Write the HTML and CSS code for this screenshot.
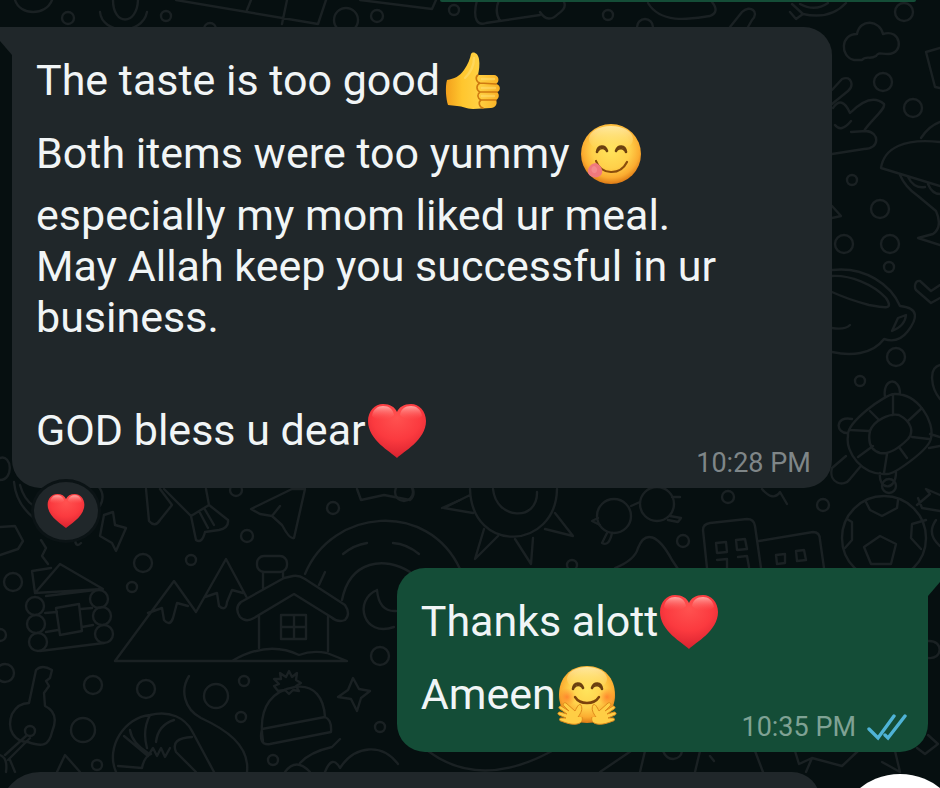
FILE: index.html
```html
<!DOCTYPE html>
<html lang="en">
<head>
    <meta charset="UTF-8">
    <meta name="viewport" content="width=device-width, initial-scale=1.0">
    <title>Chat</title>
    <link rel="stylesheet" href="styles.css">
</head>
<body>

    <!-- shared emoji shapes -->
    <svg class="defs" aria-hidden="true">
        <defs>
            <radialGradient id="red" cx="50%" cy="25%" r="75%">
                <stop offset="0" stop-color="#ff5250"/>
                <stop offset="0.55" stop-color="#fb3a3f"/>
                <stop offset="1" stop-color="#d9222f"/>
            </radialGradient>
            <linearGradient id="shine" x1="0" y1="0" x2="0" y2="1">
                <stop offset="0" stop-color="#ffb5b0" stop-opacity="0.9"/>
                <stop offset="1" stop-color="#ff5a58" stop-opacity="0"/>
            </linearGradient>
            <radialGradient id="face" cx="50%" cy="42%" r="58%">
                <stop offset="0" stop-color="#ffe45c"/>
                <stop offset="0.55" stop-color="#ffd04a"/>
                <stop offset="0.82" stop-color="#fbac30"/>
                <stop offset="1" stop-color="#dd7a16"/>
            </radialGradient>
            <linearGradient id="glow" x1="0" y1="0" x2="0" y2="1">
                <stop offset="0" stop-color="#fff1b8" stop-opacity="0.8"/>
                <stop offset="1" stop-color="#ffe070" stop-opacity="0"/>
            </linearGradient>
            <linearGradient id="hand" x1="0" y1="0" x2="1" y2="0">
                <stop offset="0" stop-color="#f3a01c"/>
                <stop offset="0.3" stop-color="#ffc62e"/>
                <stop offset="0.6" stop-color="#ffd042"/>
                <stop offset="1" stop-color="#f9b024"/>
            </linearGradient>
            <radialGradient id="blush">
                <stop offset="0" stop-color="#ff7a2a" stop-opacity="0.8"/>
                <stop offset="1" stop-color="#ff8a2a" stop-opacity="0"/>
            </radialGradient>
        </defs>
        <symbol id="heart" viewBox="0 0 60 60">
            <path fill="url(#red)" d="M30 57C24 51 1 39 1 20C1 10 8 3 16 3C23 3 28 6 30 11C32 6 37 3 44 3C52 3 59 10 59 20C59 39 36 51 30 57Z"/>
            <path fill="url(#shine)" d="M5 15C6 8 11 5 16 5C22 5 26 8 27 14C22 20 9 20 5 15ZM33 14C34 8 38 5 44 5C49 5 54 8 55 15C51 20 38 20 33 14Z"/>
        </symbol>
        <symbol id="eyes" viewBox="0 0 60 60">
            <path fill="none" stroke="#6b4010" stroke-width="2.6" stroke-linecap="round" d="M16 28C17 21 24 21 26 27M35 27C37 21 44 21 45 28"/>
            <path fill="none" stroke="#6b4010" stroke-width="1.6" d="M17 27C19 24 22 24 25 26M36 26C39 24 42 24 44 27"/>
        </symbol>
        <symbol id="yum" viewBox="0 0 60 60">
            <circle cx="30" cy="30" r="30" fill="url(#face)"/>
            <ellipse cx="30" cy="15" rx="22" ry="13" fill="url(#glow)"/>
            <use href="#eyes"/>
            <path fill="none" stroke="#8a4d0c" stroke-width="2.2" stroke-linecap="round" d="M15 37C20 51 39 52 46 38"/>
            <path fill="#f0797d" d="M15 39C20 41 23 47 20 51C17 55 9 54 7 49C6 43 11 39 15 39Z"/>
            <path fill="#f48b8d" d="M13 42C17 43 17 48 14 49C10 50 9 43 13 42Z"/>
        </symbol>
        <symbol id="hug" viewBox="0 0 60 60">
            <path fill="url(#face)" d="M30 1C47 1 58 13 58 30C58 46 47 58 30 58C13 58 2 46 2 30C2 13 13 1 30 1Z"/>
            <ellipse cx="30" cy="14" rx="20" ry="12" fill="url(#glow)"/>
            <circle cx="10" cy="32" r="9" fill="url(#blush)"/>
            <circle cx="50" cy="32" r="9" fill="url(#blush)"/>
            <use href="#eyes" y="-4"/>
            <path fill="none" stroke="#7c430c" stroke-width="2.4" stroke-linecap="round" d="M18 32C23 40 37 40 42 32"/>
            <g id="palm">
                <path fill="#ffce45" stroke="#de8a1c" stroke-width="1" stroke-linejoin="round" d="M21 52C24 48 26 44 24 40C22 38 20 42 18 46L9 38C7 37 5 39 7 41L12 46L4 41C2 41 1 43 3 44L10 49L3 47C1 47 0 49 2 50L9 53L4 53C2 53 2 56 4 56C9 58 15 60 20 59C25 58 26 55 25 52"/>
            </g>
            <use href="#palm" transform="matrix(-1 0 0 1 60 0)"/>
        </symbol>
        <symbol id="thumb" viewBox="-2 0 60 60">
            <path fill="url(#hand)" d="M4 29C11 28 17 25 21 19C25 13 27 8 28 3C29 0 35 1 36 8C37 14 36 19 35 24L51 24C56 24 57 31 53 33C58 34 58 40 54 41C57 43 56 48 53 49C55 53 52 57 48 57L30 58C23 58 20 55 14 55L5 54C3 48 2 36 4 29Z"/>
            <path fill="none" stroke="#cf7a10" stroke-width="1.6" stroke-linecap="round" d="M35 24C32 26 33 31 37 32L53 33M37 32C33 34 33 39 37 41L54 41M37 41C34 43 34 47 38 49L53 49M38 49C35 51 36 56 40 57"/>
            <path fill="none" stroke="#ffe27a" stroke-opacity="0.5" stroke-width="2.4" stroke-linecap="round" d="M31 7C31 15 27 22 22 27M39 28H51M39 37H52M39 45H51"/>
        </symbol>
    </svg>

    <!-- doodle wallpaper -->
    <svg class="wallpaper" viewBox="0 0 940 788" preserveAspectRatio="xMinYMin slice" aria-hidden="true">
        <!-- top strip -->
        <path d="M15 0C20 16 46 16 52 0M100 12C102 34 142 36 147 12M113 0C113 26 137 26 138 0M176 0L318 24L326 0M251 0L247 10M287 0L282 24M360 0L432 9L436 0M477 0C472 20 478 26 486 23L540 15M499 0Q494 12 500 21"/>
        <path d="M540 12Q548 24 558 14Q567 8 564 2M648 3C662 26 695 18 710 16Q720 12 712 2M730 27L742 12C750 4 760 12 752 20L748 27M792 4L803 14L796 19L790 12M803 14Q830 20 846 3M800 4Q815 12 828 3"/>
        <circle cx="68" cy="18" r="6"/><circle cx="166" cy="16" r="5"/><circle cx="346" cy="20" r="12"/><circle cx="377" cy="16" r="6"/><circle cx="454" cy="10" r="5"/>
        <circle cx="210" cy="29" r="6"/><circle cx="608" cy="15" r="5"/><circle cx="645" cy="27" r="8"/><circle cx="904" cy="12" r="9"/>

        <!-- cloud, hand, umbrella -->
        <path d="M854 60C840 57 840 34 857 34C860 18 880 20 883 34C901 28 905 54 888 54C880 54 879 52 876 56C870 60 866 55 862 60Z"/>
        <path d="M940 48L926 52L935 87L940 88M832 90L842 79C852 75 854 86 848 91L832 104M833 108Q842 95 850 113C861 102 874 95 884 104C886 109 870 121 864 131M835 125Q841 133 851 121M851 132L866 131C880 132 880 149 864 149L832 154"/>
        <path d="M940 186L881 168C884 148 904 138 940 142M921 138Q929 126 940 122M900 175Q905 187 918 196L936 211Q943 227 933 234L918 238L940 245M908 177Q914 189 925 187M928 184Q932 194 940 194"/>
        <circle cx="883" cy="82" r="9"/><circle cx="913" cy="108" r="9"/><circle cx="852" cy="180" r="5"/><circle cx="880" cy="209" r="9"/><circle cx="844" cy="244" r="9"/><circle cx="890" cy="244" r="9"/><circle cx="889" cy="267" r="5"/>
        <path d="M832 206L841 216L832 218"/>

        <!-- cup, tick -->
        <path d="M832 270C865 266 891 285 900 306C920 308 917 319 908 331Q898 344 884 339C872 355 850 356 832 352M832 276C850 275 873 284 886 298C894 310 885 308 869 305Q847 299 832 292M832 328Q845 330 850 325M892 331L898 318L906 315Q905 326 892 331"/>
        <path d="M940 285L931 291L920 281C915 280 914 287 916 290L931 303L940 298M940 365C928 368 931 388 940 399"/>
        <circle cx="896" cy="357" r="9"/><circle cx="860" cy="381" r="5"/>

        <!-- turtle -->
        <path d="M848 436C846 422 886 394 894 394C918 393 935 422 931 438C930 449 895 474 887 474C862 476 845 452 848 436ZM870 431C874 420 890 413 899 415C912 422 914 432 908 439C900 447 890 455 880 453C870 450 868 441 870 431ZM893 395V415M922 408L908 421M929 439L912 437M907 458L899 447M884 473L887 454M858 457L873 446M850 430L869 431M870 411L879 420M885 397C882 378 900 376 900 394M852 419C835 415 835 434 848 433M846 456L832 468C828 483 844 488 850 479L860 467M880 473C878 490 896 492 896 472M930 434L940 437M929 448L940 446"/>

        <!-- below the first bubble -->
        <path d="M0 458C12 454 14 480 0 480M0 527L15 526L23 541L18 549L0 555M14 482Q16 504 34 518M20 485Q24 500 34 506M98 486Q106 495 100 506M104 515L113 512L115 525L126 528L116 551L112 543L100 536ZM41 540L46 548L42 556L48 564"/>
        <path d="M146 489L149 521Q155 528 160 520L172 505L160 489M164 489L191 516L196 540Q202 544 205 532L219 530Q229 528 228 520L209 505L206 489M191 516L209 505M199 511L208 528M204 508L214 525M251 509L292 489H305L294 538Q290 540 282 525L272 516L260 514ZM272 516L280 506M357 489L361 500L384 495L410 500Q415 496 413 489M442 508L460 500M75 540Q76 548 81 543"/>
        <circle cx="236" cy="490" r="6"/><circle cx="333" cy="508" r="6"/><circle cx="247" cy="536" r="6"/>
        <path d="M305 574C332 508 428 500 460 569M342 600C350 560 385 556 410 572M343 554Q354 545 367 543M393 543Q407 544 419 554"/>

        <!-- sun, glasses, buildings, ball -->
        <path d="M470 489C472 555 556 550 557 489M493 489C496 520 538 522 537 492M470 495L444 508L473 513M484 529L475 559L498 536M515 539L531 564L533 538M545 529L573 536L555 513"/>
        <circle cx="614" cy="516" r="17"/><circle cx="657" cy="504" r="17"/>
        <path d="M631 506L640 502M598 518L592 521L600 525M607 533L602 543Q609 547 612 533M670 516L681 518L678 522L668 520M672 497L680 497M615 568Q635 560 638 548C645 530 658 534 672 560L678 569M762 489Q773 502 780 492L787 504"/>
        <path d="M707 568L703 530Q703 524 710 523L747 519Q754 519 755 526L761 568M759 541L813 532Q820 532 820 540L824 568M716 543L726 542L727 552L717 553ZM736 540L745 539L747 549L737 550ZM717 560L727 559V568M738 557L747 556L749 567M776 555L785 554V563L777 564ZM796 551L804 550L806 560L797 561Z"/>
        <circle cx="884" cy="538" r="42"/>
        <path d="M880 536L896 544L891 564H871L864 547ZM866 502L870 510L882 516L897 508L898 500M847 519L852 522V540L845 548M926 520L912 524L911 538L921 549M917 505L930 494L926 489L940 495M918 498L922 508L940 511M936 520Q926 534 940 546"/>
        <circle cx="572" cy="565" r="5"/><circle cx="683" cy="541" r="6"/><circle cx="728" cy="497" r="6"/><circle cx="823" cy="505" r="6"/><circle cx="889" cy="486" r="7"/><circle cx="404" cy="492" r="9"/>

        <!-- right of and below the reply -->
        <path d="M928 641C944 640 943 660 928 658M928 735L938 744L925 754L917 748M428 751Q480 790 552 751M600 772L631 751M645 751L640 772M663 751C668 763 681 760 682 751M700 751L695 772M755 751L763 772M795 751L799 764L812 758L806 772M812 758L842 766L858 751M895 751L900 772L882 762M710 756L714 761"/>

        <!-- log cabin -->
        <path d="M35 593L60 564L103 589ZM35 593L32 571L51 568M46 596L95 590M45 613L57 612M46 632L58 630M40 651L104 643M81 609L92 608M82 627L93 625M56 608L79 604L82 631L60 635Z"/>
        <circle cx="35" cy="606" r="9"/><circle cx="36" cy="624" r="9"/><circle cx="38" cy="642" r="9"/><circle cx="99" cy="599" r="9"/><circle cx="102" cy="616" r="9"/><circle cx="104" cy="634" r="9"/>

        <!-- mountains and house -->
        <path d="M115 661H347L327 653Q312 650 299 655Q268 640 232 661M115 661L174 581L196 612L226 559L247 598M148 613L162 608L164 620Q170 627 173 618L177 603L188 606M205 597L217 593L219 606Q226 612 227 602L232 590L243 593"/>
        <path d="M293 576Q299 575 305 579L345 605Q351 614 345 620Q338 623 331 617L294 594L254 618Q246 623 240 617Q234 608 241 602L284 578ZM259 616V648M328 617V651M263 588V572M283 577V572M281 615H306V639H281ZM294 615V639M281 627H306M319 585L325 572"/>
        <rect x="257" y="556" width="30" height="16" rx="7"/>
        <path d="M377 590C353 600 363 638 394 627M377 590Q379 612 396 611"/>

        <!-- key, shrimp, hook, hat, star -->
        <path d="M29 703L36 670Q42 664 52 670L50 678L46 681L49 686L44 693L45 706Q60 713 52 732C49 746 42 747 28 742C15 742 6 730 12 714Q18 703 29 703ZM26 736L5 755M30 738L8 760M0 755Q8 758 6 772M10 760L15 772M57 772L65 755L80 772"/>
        <circle cx="30" cy="731" r="5"/>
        <path d="M116 772C105 747 125 717 150 715C170 710 185 718 192 731L207 759L214 772M118 766L142 768Q144 757 151 754M124 736L148 756M130 730Q132 743 148 753M150 715Q142 730 147 748M174 720Q158 725 156 742M192 737Q170 738 176 752L196 772M148 756L153 748L157 756L161 748L165 757L170 748"/>
        <path d="M189 676C180 690 184 709 201 718C225 729 250 745 247 772M263 741C257 704 275 690 295 687C315 684 324 699 325 717M262 729L325 717Q332 720 331 732L270 744Q258 746 262 729ZM353 678L359 689L370 691L361 698L357 711L351 699L338 697L348 690ZM300 763Q310 752 332 747L340 739M285 772Q296 757 310 772M325 772Q332 754 340 768C355 745 382 743 398 764"/>
        <path d="M278 691L274 686L279 684L274 679L281 679L280 673L286 677L289 671L292 677L297 673L296 680L301 683L296 686L299 691L293 690L289 694L285 690Z"/>
        <circle cx="13" cy="582" r="9"/><circle cx="143" cy="563" r="9"/><circle cx="191" cy="560" r="5"/><circle cx="132" cy="587" r="5"/><circle cx="0" cy="635" r="6"/><circle cx="5" cy="673" r="9"/><circle cx="93" cy="685" r="9"/><circle cx="146" cy="689" r="9"/><circle cx="216" cy="696" r="12"/><circle cx="244" cy="681" r="5"/><circle cx="241" cy="717" r="5"/><circle cx="83" cy="730" r="12"/><circle cx="97" cy="765" r="5"/><circle cx="273" cy="760" r="5"/><circle cx="380" cy="656" r="9"/><circle cx="380" cy="727" r="5"/>
    </svg>

    <main class="chat">

        <div class="bubble out previous"></div>

        <div class="bubble in">
            <p class="big">The taste is too good<svg class="emoji" role="img" aria-label="thumbs up"><use href="#thumb"/></svg></p>
            <p class="big">Both items were too yummy <svg class="emoji" role="img" aria-label="yummy face"><use href="#yum"/></svg></p>
            <p>especially my mom liked ur meal.</p>
            <p>May Allah keep you successful in ur business.</p>
            <br>
            <p class="big">GOD bless u dear<svg class="emoji" role="img" aria-label="red heart"><use href="#heart"/></svg></p>
            <div class="meta"><time>10:28 PM</time></div>
        </div>

        <button class="reaction" type="button" aria-label="Reactions">
            <svg class="small-emoji"><use href="#heart"/></svg>
        </button>

        <div class="bubble out">
            <p class="big">Thanks alott<svg class="emoji" role="img" aria-label="red heart"><use href="#heart"/></svg></p>
            <p class="big">Ameen<svg class="emoji" role="img" aria-label="hugging face"><use href="#hug"/></svg></p>
            <div class="meta">
                <time>10:35 PM</time>
                <svg class="ticks" viewBox="0 0 40 28" role="img" aria-label="Read">
                    <path d="M2 16L11 25L27 3M18 22L21 25L38 3"/>
                </svg>
            </div>
        </div>

        <div class="bubble in next"></div>

    </main>

    <button class="scroll-down" type="button" aria-label="Scroll to bottom"></button>

</body>
</html>
```

FILE: styles.css
```css
* {
    box-sizing: border-box;
    margin: 0;
}

body {
    position: relative;
    height: 100vh;
    overflow: hidden;
    background-color: #060f10;
    color: #f1f5f6;
    font-family: Roboto, sans-serif;
    font-size: 43px;
    line-height: 51px;
}

.defs {
    position: absolute;
    width: 0;
    height: 0;
}

.wallpaper {
    position: absolute;
    top: 0;
    left: 0;
    width: 100%;
    height: 100%;
    fill: none;
    stroke: #1a2123;
    stroke-width: 2.4;
    stroke-linecap: round;
    stroke-linejoin: round;
}

.chat {
    position: relative;
    display: flex;
    flex-direction: column;
    height: 100vh;
    padding: 0 12px;
    overflow: hidden;
}

.bubble {
    position: relative;
    flex-shrink: 0;
    padding: 17px 21px 9px 24px;
    border-radius: 28px;
}

.in {
    width: 89.5%;
    background-color: #20272a;
    border-top-left-radius: 0;
}

.out {
    align-self: flex-end;
    width: 58%;
    background-color: #144d37;
    border-top-right-radius: 0;
}

/* little tail at the top corner */
.in::before,
.out::before {
    content: "";
    position: absolute;
    top: 0;
    width: 24px;
    height: 28px;
    background-color: inherit;
}

.in::before {
    right: 100%;
    clip-path: polygon(0 0, 100% 0, 100% 100%);
}

.out::before {
    left: 100%;
    clip-path: polygon(0 0, 100% 0, 0 100%);
}

.big {
    line-height: 73px;
}

.emoji {
    width: 60px;
    height: 60px;
    margin-left: 1px;
    vertical-align: -16px;
}

.meta {
    display: flex;
    justify-content: flex-end;
    align-items: center;
    gap: 11px;
    margin-top: -20px;
    font-size: 27px;
    line-height: 32px;
    color: #7f8688;
}

.out .meta {
    color: #7fa294;
}

.ticks {
    width: 40px;
    height: 28px;
    fill: none;
    stroke: #4fb3d6;
    stroke-width: 3.4;
    stroke-linecap: round;
}

.reaction {
    position: relative;
    display: flex;
    flex-shrink: 0;
    align-items: center;
    justify-content: center;
    width: 70px;
    height: 64px;
    margin: -9px 0 25px 19px;
    padding: 0;
    border: 3px solid #0b1315;
    border-radius: 50%;
    background-color: #20272a;
}

.small-emoji {
    width: 38px;
    height: 38px;
}

.previous {
    width: 52%;
    height: 2px;
    margin: 0 12px 25px;
    padding: 0;
    border-radius: 0 0 8px 8px;
}

.next {
    height: 80px;
    margin: 20px 0 0 -12px;
    padding: 0;
    border-radius: 40px 28px 0 0;
}

.previous::before,
.next::before {
    display: none;
}

.scroll-down {
    position: absolute;
    right: -24px;
    bottom: -114px;
    width: 128px;
    height: 128px;
    border: none;
    border-radius: 50%;
    background-color: #fff;
}
```
